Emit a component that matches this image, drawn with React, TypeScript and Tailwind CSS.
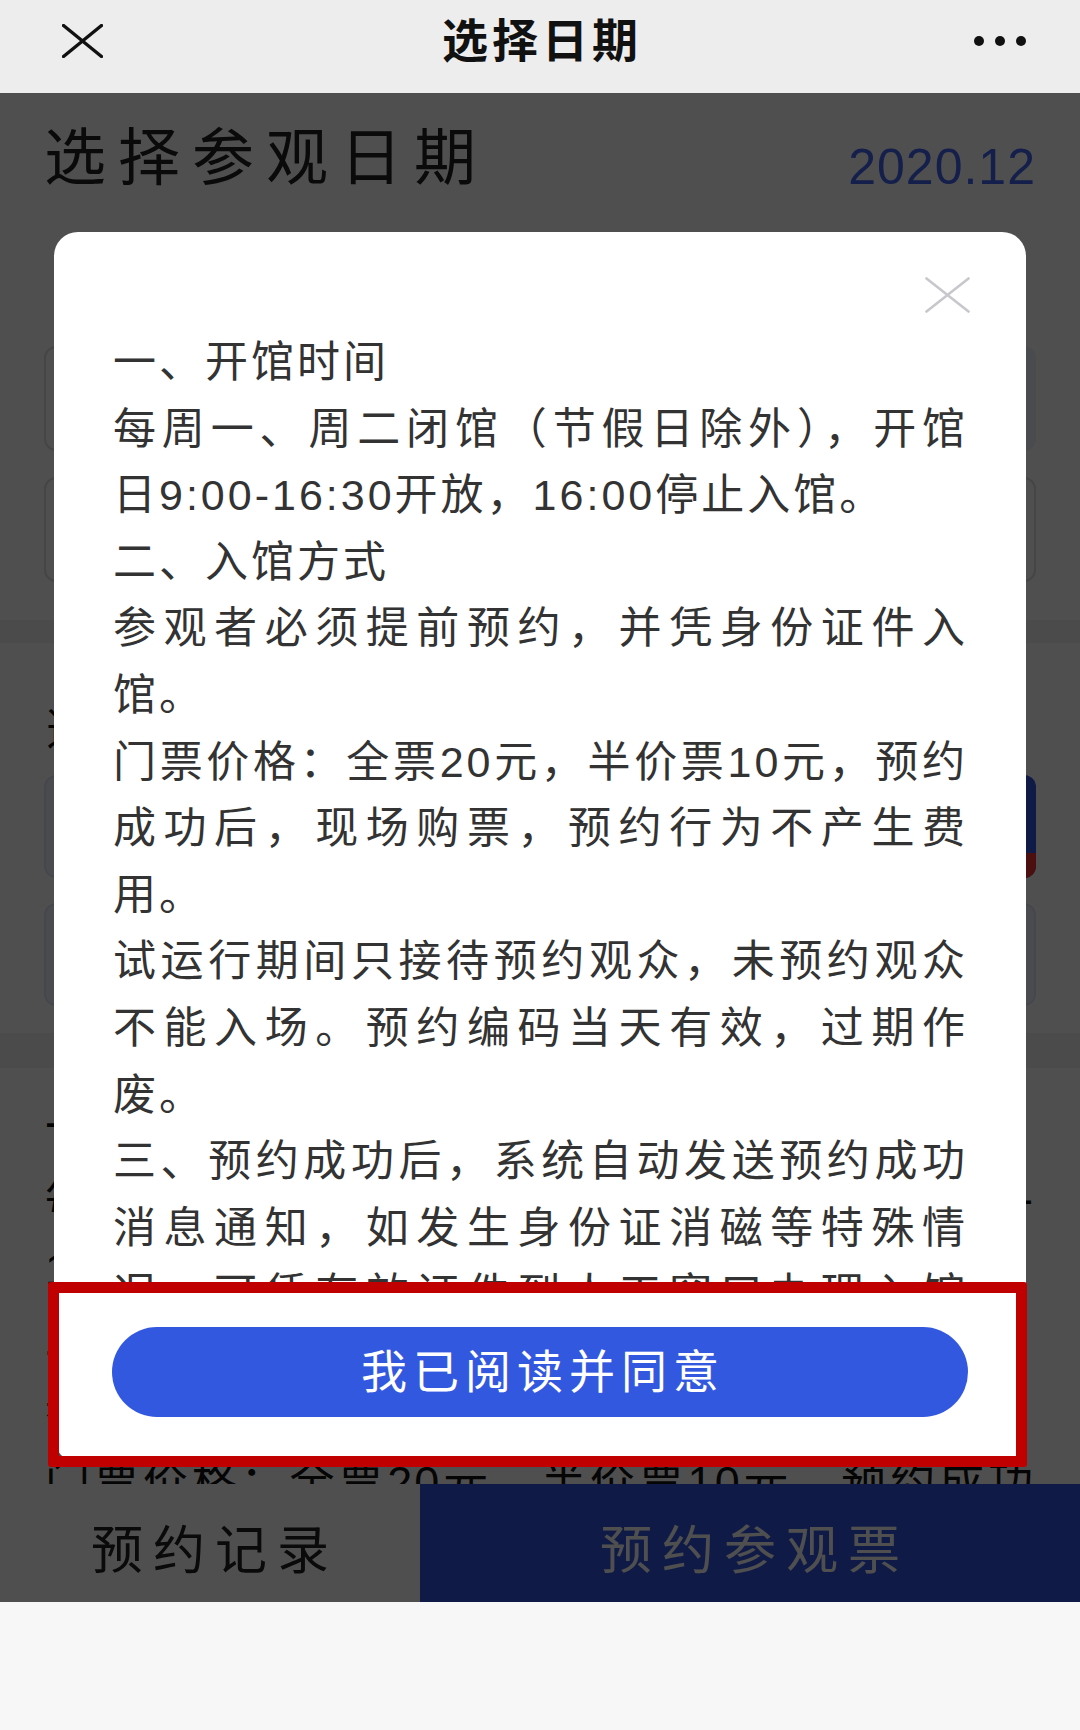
import React from "react";

// 弹窗里的须知，按截图的换行逐行排好；full = 两端对齐的整行
const noticeLines: [string, boolean][] = [
  ["一、开馆时间", false],
  ["每周一、周二闭馆（节假日除外），开馆", true],
  ["日9:00-16:30开放，16:00停止入馆。", false],
  ["二、入馆方式", false],
  ["参观者必须提前预约，并凭身份证件入", true],
  ["馆。", false],
  ["门票价格：全票20元，半价票10元，预约", true],
  ["成功后，现场购票，预约行为不产生费", true],
  ["用。", false],
  ["试运行期间只接待预约观众，未预约观众", true],
  ["不能入场。预约编码当天有效，过期作", true],
  ["废。", false],
  ["三、预约成功后，系统自动发送预约成功", true],
  ["消息通知，如发生身份证消磁等特殊情", true],
  ["况，可凭有效证件到人工窗口办理入馆", true],
];

const days = [
  { d: "01", w: "周二", active: false },
  { d: "02", w: "周三", active: false },
  { d: "03", w: "周四", active: false },
  { d: "04", w: "周五", active: true },
  { d: "05", w: "周六", active: false },
  { d: "06", w: "周日", active: false },
  { d: "07", w: "周一", active: false },
  { d: "08", w: "周二", active: false },
];

const slots = [
  { t: "09:00-10:30", selected: false },
  { t: "10:30-12:00", selected: true },
  { t: "13:00-14:30", selected: false },
  { t: "14:30-16:00", selected: false },
];

function CloseIcon({ className }: { className?: string }) {
  return (
    <svg viewBox="0 0 45 36" className={className} fill="none">
      <path d="M1.5 1.5L43.5 34.5M43.5 1.5L1.5 34.5" stroke="currentColor" strokeWidth="2.6" strokeLinecap="round" />
    </svg>
  );
}

export default function App() {
  return (
    <div className="flex h-[1730px] w-[1080px] flex-col overflow-hidden bg-[#f7f7f7] font-['Liberation_Sans','Noto_Sans_CJK_SC',sans-serif]">
      {/* 顶部导航 */}
      <header className="h-[93px] shrink-0 bg-[#ededed]">
        <div className="grid h-[82px] grid-cols-[1fr_auto_1fr] items-center">
          <div className="pl-[62px]">
            <svg viewBox="0 0 41 34" className="h-[34px] w-[41px] text-[#111]" fill="none">
              <path d="M1.5 1.5L39.5 32.5M39.5 1.5L1.5 32.5" stroke="currentColor" strokeWidth="3.4" strokeLinecap="round" />
            </svg>
          </div>
          <h1 className="pl-[4px] text-[46px] font-bold tracking-[4px] text-[#111]">选择日期</h1>
          <div className="flex justify-end pr-[54px]">
            <svg viewBox="0 0 52 10" className="h-[10px] w-[52px] text-[#111]">
              <circle cx="5" cy="5" r="5" fill="currentColor" />
              <circle cx="26" cy="5" r="5" fill="currentColor" />
              <circle cx="47" cy="5" r="5" fill="currentColor" />
            </svg>
          </div>
        </div>
      </header>

      {/* 网页区域 */}
      <div className="relative flex h-[1509px] shrink-0 flex-col overflow-hidden bg-white">
        <div className="flex-1 overflow-hidden">
          <div className="mt-[26px] flex h-[80px] items-center justify-between pl-[44px] pr-[44px]">
            <h2 className="text-[62px] leading-[80px] tracking-[12px] text-[#222]">选择参观日期</h2>
            <span className="mt-[16px] text-[50px] tracking-[1px] text-[#4465f0]">2020.12</span>
          </div>

          <div className="mt-[147px] grid grid-cols-4 gap-x-[20px] gap-y-[26px] px-[44px]">
            {days.map((day) => (
              <div
                key={day.d}
                className={
                  day.active
                    ? "flex h-[105px] flex-col items-center justify-center rounded-[12px] bg-[#eef1fb] text-[#3358e0]"
                    : "flex h-[105px] flex-col items-center justify-center rounded-[12px] border-2 border-[#dedede] text-[#333]"
                }
              >
                <span className="text-[34px]">{day.d}</span>
                <span className="text-[22px]">{day.w}</span>
              </div>
            ))}
          </div>

          <div className="mt-[38px] h-[23px] bg-[#f0f0f0]" />

          <h3 className="mt-[57px] pl-[46px] text-[44px] leading-[60px] text-[#111]">选择参观时段</h3>

          <div className="mt-[15px] grid grid-cols-2 gap-x-[24px] gap-y-[25px] px-[44px]">
            {slots.map((s) => (
              <div
                key={s.t}
                className={
                  s.selected
                    ? "relative flex h-[103px] items-center justify-center rounded-[12px] bg-[#3358e0] text-[34px] text-white"
                    : "flex h-[103px] items-center justify-center rounded-[12px] border-2 border-[#e1e6f6] bg-[#eef1fb] text-[34px] text-[#333]"
                }
              >
                {s.t}
                {s.selected && (
                  <span className="absolute bottom-0 right-0 rounded-tl-[12px] rounded-br-[12px] bg-[#f23030] px-[10px] text-[18px] leading-[25px] text-white">
                    已选
                  </span>
                )}
              </div>
            ))}
          </div>

          <div className="mt-[27px] h-[35px] bg-[#f0f0f0]" />

          <div className="mt-[24px] px-[45px] text-justify text-[45px] leading-[71px] tracking-[2px] text-[#111]">
            <p>一、开馆时间</p>
            <p>每周一、周二闭馆（节假日除外），开馆日9:00-16:30开放，16:00停止入馆。</p>
            <p>二、入馆方式</p>
            <p>参观者必须提前预约，并凭身份证件入馆。</p>
            <p>门票价格：全票20元，半价票10元，预约成功后，现场购票，预约行为不产生费用。</p>
          </div>
        </div>

        <div className="flex h-[118px] shrink-0">
          <button className="flex w-[420px] items-center justify-center bg-white pl-[10px] pt-[16px] text-[52px] tracking-[10px] text-[#222]">
            预约记录
          </button>
          <button className="flex flex-1 items-center justify-center bg-[#3358e0] pl-[10px] pt-[16px] text-[52px] tracking-[10px] text-white">
            预约参观票
          </button>
        </div>

        {/* 遮罩 */}
        <div className="absolute inset-0 bg-black/[0.69]" />

        {/* 须知弹窗 */}
        <div className="absolute left-[54px] top-[139px] flex h-[1230px] w-[972px] flex-col overflow-hidden rounded-[24px] bg-white">
          <button className="absolute right-[56px] top-[45px] text-[#c7c7cc]">
            <CloseIcon className="h-[36px] w-[45px]" />
          </button>
          <div className="h-[1050px] shrink-0 overflow-hidden pl-[59px] pr-[58px] pt-[97px] text-[43px] leading-[66.6px] tracking-[3px] text-[#333]">
            {noticeLines.map(([line, full], i) => (
              <p key={i} className={full ? "text-justify [text-align-last:justify]" : ""}>
                {line}
              </p>
            ))}
          </div>
          <div className="flex flex-1 items-center px-[58px]">
            <button className="flex h-[90px] w-full items-center justify-center rounded-full bg-[#3358e0] pl-[6px] text-[46px] tracking-[6px] text-white">
              我已阅读并同意
            </button>
          </div>
        </div>

        {/* 红色标注框 */}
        <div className="pointer-events-none absolute left-[48px] top-[1189px] h-[185px] w-[979px] rounded-[3px] border-[11px] border-[#c00000]" />
      </div>
    </div>
  );
}
